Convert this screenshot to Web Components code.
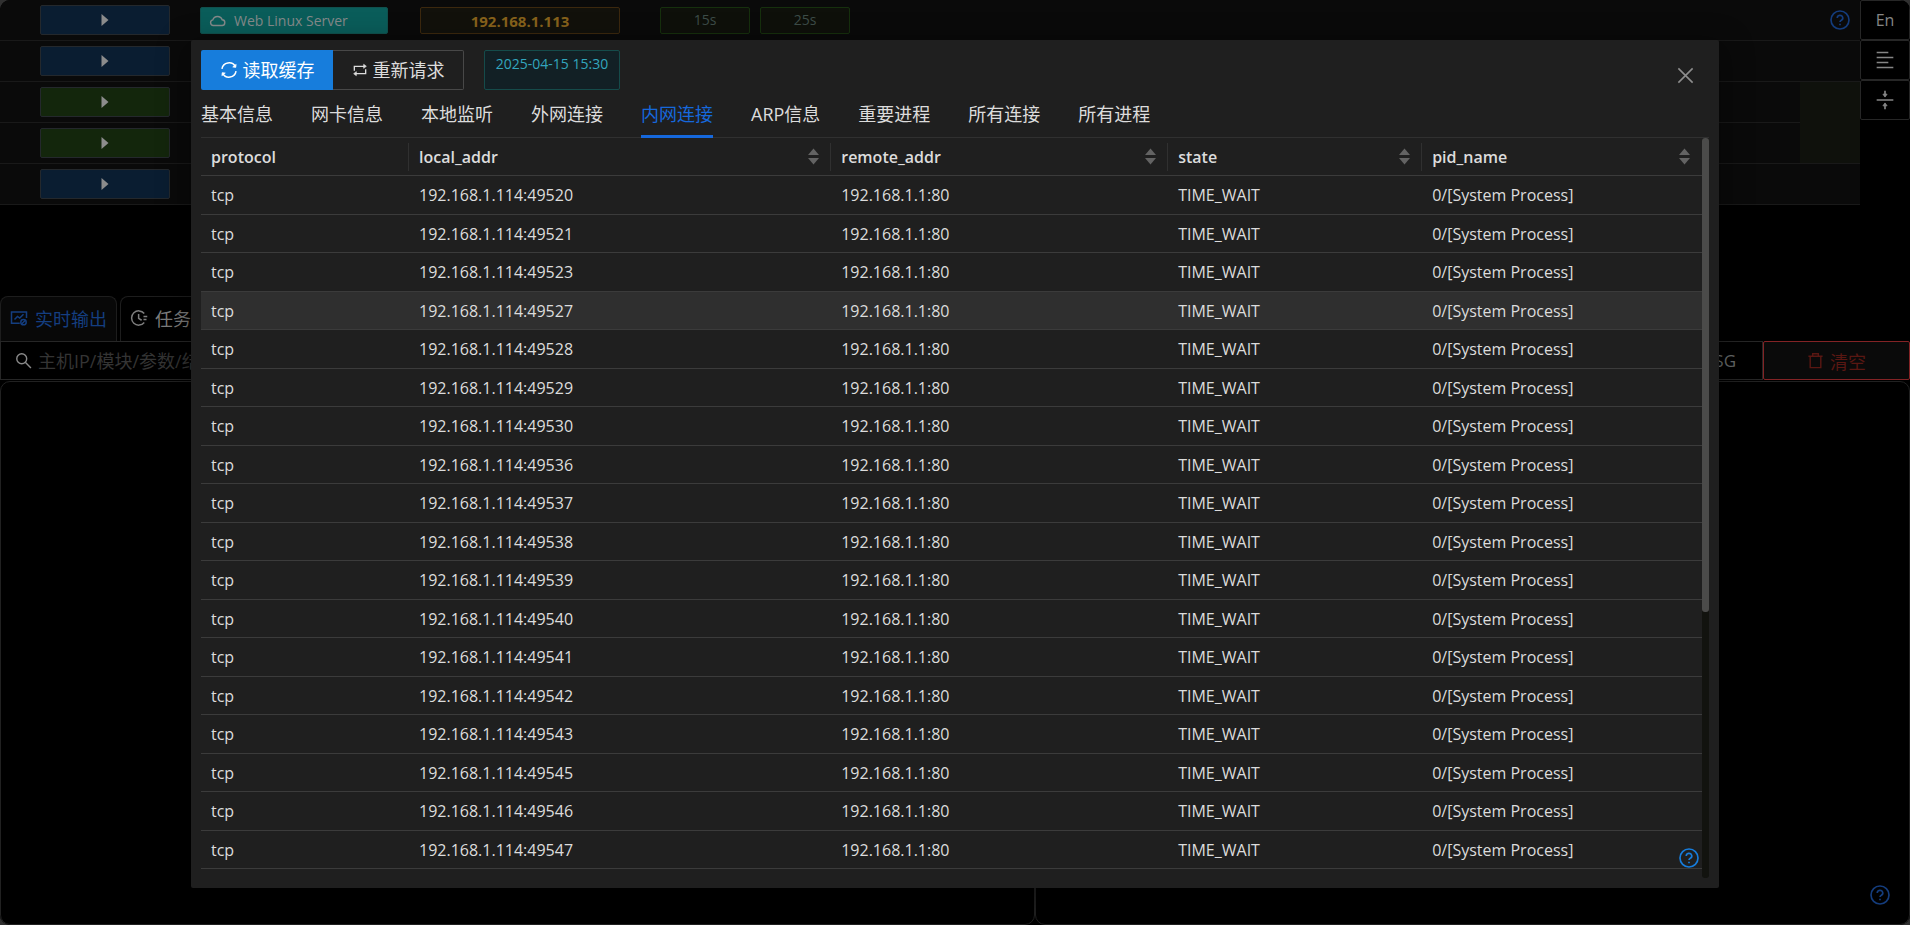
<!DOCTYPE html>
<html lang="zh-CN">
<head>
<meta charset="utf-8">
<title>网络连接</title>
<style>
html, body { margin: 0; height: 100%; background: #303030; }
body { font-family: "Open Sans", "Noto Sans CJK SC", sans-serif; font-size: 16px; color: #dcdcdc; overflow: hidden; }
</style>
</head>
<body>
<ops-app></ops-app>
<script>
const define = (name, html, setup) => {
  const tpl = document.createElement('template');
  tpl.innerHTML = html;
  customElements.define(name, class extends HTMLElement {
    constructor() {
      super();
      this.attachShadow({ mode: 'open' }).append(tpl.content.cloneNode(true));
    }
    connectedCallback() { if (setup) setup(this, this.shadowRoot); }
  });
};

const ICONS = {
  caret: '<path d="M7.800 4.800l8.400 7.200-8.400 7.200z" fill="currentColor" stroke="none"/>',
  cloud: '<path d="M6 19a4 4 0 0 1-.6-7.9A7 7 0 0 1 18.6 11a4 4 0 0 1-.6 8z"/>',
  reload: '<path d="M2.6 10.500A9.600 9.600 0 0 1 20.500 7.500M21.400 13.500A9.600 9.600 0 0 1 3.500 16.500"/><path d="M21.500 4.500l-.5 4-4-.6zM2.500 19.500l.5-4 4 .6z" fill="currentColor" stroke-width="1"/>',
  repeat: '<path d="M3.500 13V6.500H19M20.500 11v6.500H5"/><path d="M17.500 3.500l4 3-4 3zM6.500 14.500l-4 3 4 3z" fill="currentColor" stroke-width="1"/>',
  help: '<circle cx="12" cy="12" r="10.800"/><path d="M8.700 9.600a3.300 3.100 0 1 1 4.900 2.600c-1 .6-1.600 1.100-1.600 2.300M12 16.600v1.800"/>',
  close: '<path d="M3 3l18 18M21 3L3 21"/>',
  lines: '<path d="M2 3h14M2 9h20M2 15h14M2 21h20"/>',
  collapse: '<path d="M2 12h20M12 1v5M12 23v-5"/><path d="M12 8.500L9.500 5h5zM12 15.500L9.500 19h5z" fill="currentColor" stroke-width="1"/>',
  monitor: '<path d="M13 19H2V4h20v8M6 14l4-4 3 2 5-5"/><circle cx="18" cy="17.500" r="3.600"/><path d="M15.500 20l5-5"/>',
  clock: '<path d="M19 6A9.500 9.500 0 1 0 19 18M11.500 6.500V12.500l4 2.500M18 10h5M18 14h4"/>',
  search: '<circle cx="9.500" cy="9.500" r="7"/><path d="M14.500 14.500l8 8"/>',
  trash: '<path d="M2 6h20M8 6V2.500h8V6M4.500 6v16h15V6"/>'
};

customElements.define('ui-icon', class extends HTMLElement {
  constructor() { super(); this.attachShadow({ mode: 'open' }); }
  connectedCallback() {
    this.shadowRoot.innerHTML = `<style>
      :host { display: inline-flex; flex: none; width: var(--icon-size, 18px); height: var(--icon-size, 18px); }
      svg { width: 100%; height: 100%; }
    </style><svg viewBox="0 0 24 24" fill="none" stroke="currentColor" stroke-width="2" aria-hidden="true">${ICONS[this.getAttribute('name')]}</svg>`;
  }
});

define('run-button', `<style>
  :host { display: block; --face: #0a1d31; }
  :host([tone=green]) { --face: #13260c; }
  button { display: flex; width: 100%; height: 30px; padding: 0; align-items: center; justify-content: center; background: var(--face); border: 1px solid #24282c; border-radius: 2px; color: #8c8c8c; --icon-size: 20px; }
  </style><button type="button" aria-label="run"><ui-icon name="caret"></ui-icon></button>`);

define('ui-tag', `<style>
  :host { display: flex; box-sizing: border-box; height: 27px; align-items: center; justify-content: center; gap: 8px; padding: 0 8px; border: 1px solid #16300d; border-radius: 2px; background: #0e100a; color: #3d4d48; font-size: 14px; line-height: 20px; white-space: nowrap; --icon-size: 17px; }
  :host([tone=teal]) { justify-content: flex-start; padding-top: 1px; background: #0a5d5a; border-color: #10514e; color: #858a8a; }
  :host([tone=gold]) { padding-top: 1px; background: #12110b; border-color: #3c280e; color: #87621b; font-size: 15px; font-weight: 700; }
  :host([tone=cyan]) { height: 40px; align-items: flex-start; background: #122025; border-color: #154b4a; color: #33a6bd; }
  </style><slot></slot>`);

define('help-button', `<style>
  :host { display: inline-flex; }
  button { display: flex; padding: 0; border: 0; background: none; color: inherit; --icon-size: 20px; }
  </style><button type="button" aria-label="help"><ui-icon name="help"></ui-icon></button>`);

define('host-list', `<style>
  :host { display: block; min-width: 0; flex: 1; }
  table { width: 100%; table-layout: fixed; border-collapse: separate; border-spacing: 0; background: #0a0a0a; }
  td { height: 40px; padding: 0; border-bottom: 1px solid #191919; }
  td:first-child { padding: 0 20px 0 40px; }
  .pad { padding-left: 10px; }
  .name { width: 188px; } .ip { width: 200px; }
  .times { display: flex; gap: 10px; } .times ui-tag { width: 90px; }
  .help { padding-left: 20px; color: #143c7c; text-align: center; line-height: 0; }
  .fixed { background: #0f110c; }
  </style>
  <table>
    <colgroup><col style="width:190px"><col style="width:220px"><col style="width:240px"><col style="width:220px"><col><col style="width:60px"></colgroup>
    <tbody>
    <tr><td><run-button></run-button></td>
      <td class="pad"><ui-tag class="name" tone="teal"><ui-icon name="cloud"></ui-icon>Web Linux Server</ui-tag></td>
      <td class="pad"><ui-tag class="ip" tone="gold">192.168.1.113</ui-tag></td>
      <td class="pad"><div class="times"><ui-tag>15s</ui-tag><ui-tag>25s</ui-tag></div></td>
      <td></td><td class="help"><help-button></help-button></td></tr>
    <tr><td><run-button></run-button></td><td colspan="5"></td></tr>
    <tr><td><run-button tone="green"></run-button></td><td colspan="4"></td><td class="fixed" rowspan="2"></td></tr>
    <tr><td><run-button tone="green"></run-button></td><td colspan="4"></td></tr>
    <tr><td><run-button></run-button></td><td colspan="5"></td></tr>
    </tbody>
  </table>`);

define('side-rail', `<style>
  :host { display: flex; flex-direction: column; width: 50px; flex: none; }
  button { display: flex; height: 40px; padding: 0; align-items: center; justify-content: center; font: inherit; line-height: 20px; color: #858585; background: #000; border: 1px solid #262626; border-radius: 2px; --icon-size: 20px; }
  button:first-child { border-top-right-radius: 8px; }
  </style>
  <button type="button">En</button>
  <button type="button" aria-label="menu"><ui-icon name="lines"></ui-icon></button>
  <button type="button" aria-label="collapse"><ui-icon name="collapse"></ui-icon></button>`);

define('output-panel', `<style>
  :host { display: flex; flex-direction: column; flex: 1; min-height: 0; }
  button { font: inherit; white-space: nowrap; }
  .tabs { display: flex; gap: 3px; height: 45px; font-size: 18px; --icon-size: 18px; }
  .tabs button { display: flex; align-items: center; gap: 7px; padding: 0 9px 2px; background: #000; color: #7d7d7d; border: 1px solid #1d1d1d; border-bottom: 0; border-radius: 8px 8px 0 0; }
  .tabs .on { background: #080808; color: #143e80; }
  .bar { display: flex; height: 39px; font-size: 18px; }
  .search { display: flex; flex: 1; align-items: center; gap: 6px; padding: 0 14px; border: 1px solid #262626; color: #8a8a8a; --icon-size: 17px; }
  input { flex: 1; min-width: 0; padding: 0; border: 0; outline: 0; background: none; font: inherit; color: #999; }
  input::placeholder { color: #343434; opacity: 1; }
  .msg { padding: 0 26px; background: #000; color: #686c6c; border: 1px solid #262626; border-left: 0; font-size: 17px; }
  .clear { display: flex; box-sizing: border-box; width: 147px; align-items: center; justify-content: center; gap: 6px; background: #0a0a0a; color: #591712; border: 1px solid #832325; border-radius: 2px; --icon-size: 17px; }
  .panes { display: flex; flex: 1; margin-top: 1px; min-height: 0; }
  .panes div { border: 1px solid #212121; border-radius: 10px; box-sizing: border-box; }
  .panes div:first-child { flex: 1035; } .panes div:last-child { flex: 875; }
  </style>
  <div class="tabs">
    <button type="button" class="on"><ui-icon name="monitor"></ui-icon>实时输出</button>
    <button type="button"><ui-icon name="clock"></ui-icon>任务</button>
  </div>
  <div class="bar">
    <label class="search"><ui-icon name="search"></ui-icon><input type="text" placeholder="主机IP/模块/参数/结果" aria-label="搜索"></label>
    <button type="button" class="msg">MSG</button>
    <button type="button" class="clear"><ui-icon name="trash"></ui-icon>清空</button>
  </div>
  <div class="panes"><div></div><div></div></div>`);

define('connection-table', `<style>
  :host { display: block; }
  table { width: 100%; table-layout: fixed; border-collapse: separate; border-spacing: 0; line-height: 24px; }
  th, td { padding: 0 10px; text-align: left; border-bottom: 1px solid #3b3b3b; white-space: nowrap; overflow: hidden; }
  th { height: 37px; font-weight: 600; }
  .head { display: flex; align-items: center; justify-content: space-between; height: 28px; margin-right: -10px; padding-right: 11px; border-right: 1px solid #303030; }
  th:last-child .head { border-right-color: transparent; }
  .sort { display: flex; flex-direction: column; gap: 3px; padding: 0; border: 0; background: none; }
  .sort svg { display: block; width: 11px; height: 7px; fill: #636363; }
  tbody tr:nth-child(odd) td { height: 38px; }
  tbody tr:nth-child(even) td { height: 37px; }
  .hover td { background: #2f2f2f; }
  </style>
  <table>
    <colgroup><col style="width:208px"><col style="width:28.130%"><col style="width:22.450%"><col style="width:16.920%"><col></colgroup>
    <thead><tr></tr></thead><tbody></tbody>
  </table>`, (el, root) => {
  const sort = '<button type="button" class="sort" aria-label="sort"><svg viewBox="0 0 11 7"><path d="M5.500 0.500L11 7H0z"/></svg><svg viewBox="0 0 11 7"><path d="M5.500 6.500L11 0H0z"/></svg></button>';
  root.querySelector('thead tr').innerHTML = ['protocol', 'local_addr', 'remote_addr', 'state', 'pid_name']
    .map((name, i) => `<th><div class="head"><span>${name}</span>${i ? sort : ''}</div></th>`).join('');
  const ports = [49520, 49521, 49523, 49527, 49528, 49529, 49530, 49536, 49537, 49538, 49539, 49540, 49541, 49542, 49543, 49545, 49546, 49547];
  root.querySelector('tbody').innerHTML = ports.map(port =>
    `<tr${port === 49527 ? ' class="hover"' : ''}><td>tcp</td><td>192.168.1.114:${port}</td><td>192.168.1.1:80</td><td>TIME_WAIT</td><td>0/[System Process]</td></tr>`).join('');
});

define('tab-strip', `<style>
  :host { display: flex; gap: 38px; height: 48px; box-shadow: inset 0 -1px #303030; }
  button { padding: 2px 0 0; border: 0; border-bottom: 3px solid transparent; background: none; font: inherit; font-size: 18px; line-height: 24px; color: #dcdcdc; white-space: nowrap; }
  button[aria-selected=true] { color: #1668dc; border-color: #1668dc; }
  </style>`, (el, root) => {
  el.setAttribute('role', 'tablist');
  for (const name of ['基本信息', '网卡信息', '本地监听', '外网连接', '内网连接', 'ARP信息', '重要进程', '所有连接', '所有进程']) {
    const b = document.createElement('button');
    b.type = 'button';
    b.setAttribute('role', 'tab');
    b.setAttribute('aria-selected', name === '内网连接');
    b.textContent = name;
    root.append(b);
  }
});

define('host-dialog', `<style>
  :host { display: block; box-sizing: border-box; padding: 10px; background: #1f1f1f; border-radius: 2px; box-shadow: 0 9px 28px 8px rgba(0,0,0,.3); }
  .bar { display: flex; height: 40px; }
  .bar button { display: flex; box-sizing: border-box; width: 132px; padding: 0; align-items: center; justify-content: center; gap: 5px; font: inherit; font-size: 18px; line-height: 24px; color: #dcdcdc; background: none; border: 1px solid #484848; border-left: 0; border-radius: 0 2px 2px 0; white-space: nowrap; }
  .bar .primary { background: #177ddc; border: 0; color: #fff; border-radius: 2px 0 0 2px; }
  .bar .repeat { width: 131px; --icon-size: 16px; }
  .bar ui-tag { margin-left: 20px; width: 136px; padding-top: 3px; }
  .bar .close { width: 48px; height: 50px; margin-left: auto; border: 0; color: #8d8d8d; --icon-size: 19px; }
  .body { display: flex; }
  connection-table { flex: 1; min-width: 0; padding-bottom: 9px; }
  .track { width: 7px; background: #12130f; border-radius: 3px; }
  .thumb { height: 64%; background: #4b4b4a; border-radius: 3px; }
  help-button { position: absolute; right: 20px; bottom: 20px; color: #177ddc; }
  </style>
  <div class="bar">
    <button type="button" class="primary"><ui-icon name="reload"></ui-icon>读取缓存</button>
    <button type="button" class="repeat"><ui-icon name="repeat"></ui-icon>重新请求</button>
    <ui-tag tone="cyan">2025-04-15 15:30</ui-tag>
    <button type="button" class="close" aria-label="close"><ui-icon name="close"></ui-icon></button>
  </div>
  <tab-strip></tab-strip>
  <div class="body"><connection-table></connection-table><div class="track"><div class="thumb"></div></div></div>
  <help-button></help-button>`);

define('ops-app', `<style>
  :host { display: flex; flex-direction: column; position: relative; height: 100%; background: #000; border-radius: 10px; overflow: hidden; }
  .top { display: flex; height: 296px; align-items: flex-start; }
  host-dialog { position: absolute; top: 40px; left: 10%; width: 80%; }
  .fab { position: absolute; right: 20px; bottom: 20px; color: #143c7c; }
  </style>
  <div class="top"><host-list></host-list><side-rail></side-rail></div>
  <output-panel></output-panel>
  <help-button class="fab"></help-button>
  <host-dialog role="dialog" aria-label="内网连接"></host-dialog>`);
</script>
</body>
</html>
